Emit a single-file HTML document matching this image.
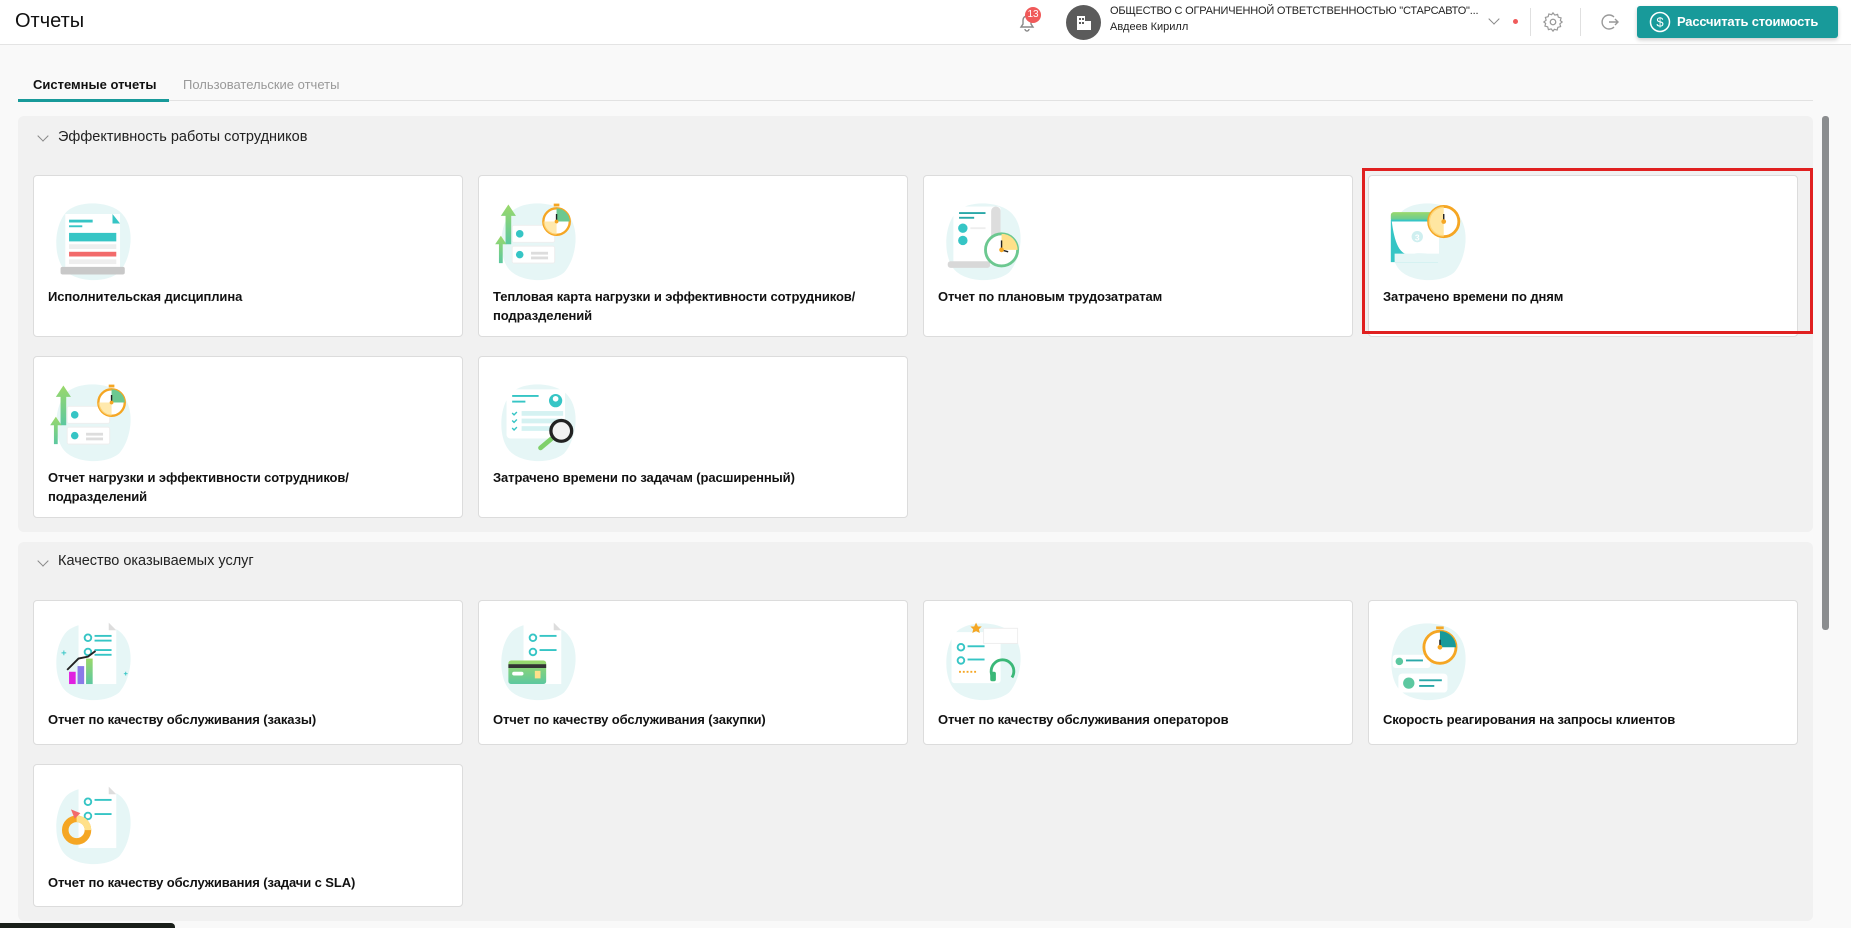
<!DOCTYPE html>
<html><head><meta charset="utf-8">
<style>
*{margin:0;padding:0;box-sizing:border-box}
body{width:1851px;height:928px;overflow:hidden;background:#f9f9f9;font-family:"Liberation Sans","Noto Sans CJK SC",sans-serif;color:#1a1a1a;position:relative}
.abs{position:absolute}
.hdr{left:0;top:0;width:1851px;height:45px;background:#fff;border-bottom:1px solid #e4e4e4}
.panel{background:#f1f1f1;border-radius:6px}
.card{position:absolute;background:#fff;border:1px solid #dcdcdc;border-radius:4px;width:430px}
.card svg{position:absolute;left:14px}
.card .t{position:absolute;left:14px;right:20px;font-size:13px;font-weight:bold;line-height:19px;color:#111;letter-spacing:-0.1px}
.sec{font-size:14.5px;color:#222}
.chev{width:8px;height:8px;border-right:1.3px solid #888;border-bottom:1.3px solid #888;transform:rotate(45deg)}
</style></head><body>
<div class="abs hdr"></div>
<div class="abs" style="left:15px;top:10px;font-size:20px;color:#111">Отчеты</div>
<svg class="abs" style="left:1016px;top:11px" width="22" height="22" viewBox="0 0 22 22"><path d="M5 16h12l-2-3V9a4 4 0 0 0-8 0v4z" fill="none" stroke="#888" stroke-width="1.4"/><path d="M9 18a2 2 0 0 0 4 0" fill="none" stroke="#888" stroke-width="1.4"/></svg>
<div class="abs" style="left:1025px;top:7px;width:16px;height:16px;border-radius:8px;background:#f05a5a;color:#fff;font-size:10px;text-align:center;line-height:16px">13</div>
<div class="abs" style="left:1066px;top:5px;width:35px;height:35px;border-radius:50%;background:#5b5b5b"></div>
<svg class="abs" style="left:1074px;top:13px" width="20" height="20" viewBox="0 0 20 20"><rect x="3" y="3" width="8" height="14" fill="#fff"/><rect x="11" y="8" width="6" height="9" fill="#fff"/><rect x="5" y="5" width="2" height="2" fill="#5b5b5b"/><rect x="8" y="5" width="2" height="2" fill="#5b5b5b"/><rect x="5" y="9" width="2" height="2" fill="#5b5b5b"/><rect x="8" y="9" width="2" height="2" fill="#5b5b5b"/></svg>
<div class="abs" style="left:1110px;top:5px;font-size:11px;color:#222;white-space:nowrap;letter-spacing:-0.2px">ОБЩЕСТВО С ОГРАНИЧЕННОЙ ОТВЕТСТВЕННОСТЬЮ "СТАРСАВТО"...</div>
<div class="abs" style="left:1110px;top:21px;font-size:11px;color:#222">Авдеев Кирилл</div>
<div class="abs chev" style="left:1490px;top:15px"></div>
<div class="abs" style="left:1513px;top:19px;width:5px;height:5px;border-radius:50%;background:#f05a5a"></div>
<div class="abs" style="left:1530px;top:8px;width:1px;height:28px;background:#e0e0e0"></div>
<svg class="abs" style="left:1542px;top:11px" width="22" height="22" viewBox="0 0 24 24"><circle cx="12" cy="12" r="3" fill="none" stroke="#999" stroke-width="1.4"/><path d="M12 2l2 2.5 3-.8.8 3 3 .8-.8 3L22 12l-2.5 2 .8 3-3 .8-.8 3-3-.8L12 22l-2-2.5-3 .8-.8-3-3-.8.8-3L2 12l2.5-2-.8-3 3-.8.8-3 3 .8z" fill="none" stroke="#999" stroke-width="1.3"/></svg>
<div class="abs" style="left:1580px;top:8px;width:1px;height:28px;background:#e0e0e0"></div>
<svg class="abs" style="left:1599px;top:11px" width="22" height="22" viewBox="0 0 22 22"><path d="M15 6A7 7 0 1 0 15 16" fill="none" stroke="#999" stroke-width="1.4"/><path d="M10 11h9M16 8l3 3-3 3" fill="none" stroke="#999" stroke-width="1.4"/></svg>
<div class="abs" style="left:1637px;top:6px;width:201px;height:32px;background:#189a9a;border-radius:3px;box-shadow:0 2px 4px rgba(0,0,0,.2)"></div>
<svg class="abs" style="left:1649px;top:11px" width="22" height="22" viewBox="0 0 22 22"><circle cx="11" cy="11" r="9.5" fill="none" stroke="#fff" stroke-width="1.5"/><text x="11" y="15.5" font-size="13" fill="#fff" text-anchor="middle" font-family="Liberation Sans">$</text></svg>
<div class="abs" style="left:1677px;top:14px;font-size:13px;color:#fff;font-weight:bold;letter-spacing:-0.2px">Рассчитать стоимость</div>

<div class="abs" style="left:18px;top:100px;width:1795px;height:1px;background:#e2e2e2"></div>
<div class="abs" style="left:18px;top:99px;width:151px;height:3px;background:#189a9a"></div>
<div class="abs" style="left:33px;top:77px;font-size:13px;font-weight:bold;color:#111">Системные отчеты</div>
<div class="abs" style="left:183px;top:77px;font-size:13px;color:#999">Пользовательские отчеты</div>

<div class="abs" style="left:1822px;top:116px;width:7px;height:514px;background:#8b8d8f;border-radius:3px"></div>
<div class="abs" style="left:0;top:923px;width:175px;height:5px;background:#1a1f1a;border-radius:0 4px 0 0"></div>

<svg width="0" height="0" style="position:absolute">
<defs>
<linearGradient id="gg" x1="0" y1="1" x2="0" y2="0"><stop offset="0" stop-color="#5cc8a0"/><stop offset="1" stop-color="#9ad86a"/></linearGradient>
<g id="blob"><path d="M20 15C35 2 70 5 80 20C92 35 88 65 75 80C60 92 30 90 18 78C5 65 5 30 20 15Z" fill="#e6f6f6"/></g>
<g id="watch"><circle cx="0" cy="0" r="14" fill="#fff" stroke="#f5a623" stroke-width="2.5"/><path d="M0 -14A14 14 0 0 1 14 0L0 0Z" fill="#6cc890"/><path d="M0 0L0 14A14 14 0 0 1 -14 0Z" fill="#ffe08a" opacity=".7"/><rect x="-3" y="-19" width="6" height="3" fill="#f5a623"/><line x1="0" y1="0" x2="0" y2="-8" stroke="#222" stroke-width="1.5"/><circle cx="0" cy="0" r="2" fill="#f5a623"/></g>
</defs></svg>

<div class="abs panel" style="left:18px;top:116px;width:1795px;height:416px"></div>
<div class="abs chev" style="left:39px;top:132px"></div>
<div class="abs sec" style="left:58px;top:129px">Эффективность работы сотрудников</div>

<div class="card" style="left:33px;top:175px;height:162px">
<svg style="top:21px" width="95" height="85" viewBox="0 0 100 90"><use href="#blob"/><rect x="18" y="18" width="58" height="60" fill="#fff"/><path d="M68 18l8 10h-8z" fill="#36c5c5"/><rect x="22" y="24" width="25" height="3" fill="#36c5c5"/><rect x="22" y="30" width="14" height="2" fill="#36c5c5"/><rect x="22" y="38" width="50" height="9" fill="#36c5c5"/><rect x="22" y="50" width="50" height="5" fill="#eee"/><rect x="22" y="58" width="50" height="5" fill="#f26b6b"/><rect x="22" y="66" width="50" height="5" fill="#eee"/><rect x="13" y="74" width="68" height="8" rx="2" fill="#c8c8c8"/></svg>
<div class="t" style="top:111px">Исполнительская дисциплина</div></div>

<div class="card" style="left:478px;top:175px;height:162px">
<svg style="top:21px" width="95" height="85" viewBox="0 0 100 90"><use href="#blob"/><path d="M8 20l8-12 8 12h-5v30h-6V20z" fill="url(#gg)"/><path d="M2 50l6-9 6 9h-4v20H6V50z" fill="url(#gg)"/><rect x="20" y="30" width="45" height="18" rx="2" fill="#fff" stroke="#eee"/><rect x="20" y="52" width="45" height="18" rx="2" fill="#fff" stroke="#eee"/><circle cx="28" cy="39" r="4" fill="#36c5c5"/><circle cx="28" cy="61" r="4" fill="#36c5c5"/><rect x="40" y="58" width="18" height="3" fill="#ddd"/><rect x="40" y="63" width="18" height="3" fill="#ddd"/><use href="#watch" transform="translate(67,26)"/></svg>
<div class="t" style="top:111px">Тепловая карта нагрузки и эффективности сотрудников/ подразделений</div></div>

<div class="card" style="left:923px;top:175px;height:162px">
<svg style="top:21px" width="95" height="85" viewBox="0 0 100 90"><use href="#blob"/><rect x="16" y="10" width="50" height="62" rx="3" fill="#fff"/><rect x="56" y="10" width="10" height="62" rx="5" fill="#ddd"/><rect x="22" y="16" width="28" height="2" fill="#2aa8a8"/><rect x="22" y="21" width="16" height="2" fill="#2aa8a8"/><circle cx="26" cy="33" r="5" fill="#36c5c5"/><circle cx="26" cy="46" r="5" fill="#36c5c5"/><rect x="34" y="32" width="16" height="2" fill="#eee"/><rect x="10" y="68" width="45" height="7" rx="3" fill="#d8d8d8"/><circle cx="67" cy="56" r="17" fill="#fff" stroke="#6cc890" stroke-width="3"/><path d="M67 39A17 17 0 0 1 84 56L67 56Z" fill="#ffe08a"/><line x1="67" y1="56" x2="67" y2="46" stroke="#222" stroke-width="1.5"/><line x1="67" y1="56" x2="74" y2="58" stroke="#222" stroke-width="1.5"/><circle cx="67" cy="56" r="2.5" fill="#f5a623"/></svg>
<div class="t" style="top:111px">Отчет по плановым трудозатратам</div></div>

<div class="card" style="left:1368px;top:175px;height:162px">
<svg style="top:21px" width="95" height="85" viewBox="0 0 100 90"><use href="#blob"/><rect x="8" y="16" width="52" height="10" rx="3" fill="url(#gg)"/><path d="M8 24h50v45H8z" fill="#36c5c5"/><path d="M9 26h50v35c-10 0-20-2-30 0C18 62 12 50 9 26z" fill="#fff"/><circle cx="36" cy="42" r="6" fill="#cfeff0"/><text x="36" y="46" font-size="9" fill="#fff" text-anchor="middle" font-family="Liberation Sans" font-weight="bold">3</text><path d="M12 60h58v9H12z" fill="#e6f6f6"/><circle cx="64" cy="26" r="16" fill="#fff" stroke="#f5a623" stroke-width="3"/><path d="M64 10A16 16 0 0 0 64 42Z" fill="#ffe08a" opacity=".8"/><line x1="64" y1="26" x2="64" y2="18" stroke="#222" stroke-width="1.5"/><circle cx="64" cy="26" r="2.5" fill="#f5a623"/></svg>
<div class="t" style="top:111px">Затрачено времени по дням</div></div>

<div class="card" style="left:33px;top:356px;height:162px">
<svg style="top:21px" width="95" height="85" viewBox="0 0 100 90"><use href="#blob"/><path d="M8 20l8-12 8 12h-5v30h-6V20z" fill="url(#gg)"/><path d="M2 50l6-9 6 9h-4v20H6V50z" fill="url(#gg)"/><rect x="20" y="30" width="45" height="18" rx="2" fill="#fff" stroke="#eee"/><rect x="20" y="52" width="45" height="18" rx="2" fill="#fff" stroke="#eee"/><circle cx="28" cy="39" r="4" fill="#36c5c5"/><circle cx="28" cy="61" r="4" fill="#36c5c5"/><rect x="40" y="58" width="18" height="3" fill="#ddd"/><rect x="40" y="63" width="18" height="3" fill="#ddd"/><use href="#watch" transform="translate(67,26)"/></svg>
<div class="t" style="top:111px">Отчет нагрузки и эффективности сотрудников/ подразделений</div></div>

<div class="card" style="left:478px;top:356px;height:162px">
<svg style="top:21px" width="95" height="85" viewBox="0 0 100 90"><use href="#blob"/><rect x="14" y="12" width="62" height="52" rx="4" fill="#fff"/><rect x="20" y="18" width="28" height="2" fill="#36c5c5"/><rect x="20" y="24" width="14" height="2" fill="#36c5c5"/><circle cx="66" cy="24" r="7" fill="#36c5c5"/><circle cx="66" cy="22" r="3" fill="#fff"/><rect x="30" y="35" width="44" height="5" fill="#d5f2f2"/><rect x="30" y="43" width="44" height="5" fill="#d5f2f2"/><rect x="30" y="51" width="30" height="5" fill="#d5f2f2"/><path d="M20 37l2 2 3-3M20 45l2 2 3-3M20 53l2 2 3-3" stroke="#36c5c5" stroke-width="1.5" fill="none"/><line x1="62" y1="64" x2="50" y2="74" stroke="#7ed06a" stroke-width="5" stroke-linecap="round"/><circle cx="72" cy="56" r="11" fill="#f2f2f2" stroke="#222" stroke-width="3.5"/></svg>
<div class="t" style="top:111px">Затрачено времени по задачам (расширенный)</div></div>

<div class="abs" style="left:1362px;top:168px;width:451px;height:166px;border:3px solid #e02020"></div>

<div class="abs panel" style="left:18px;top:542px;width:1795px;height:379px"></div>
<div class="abs chev" style="left:39px;top:557px"></div>
<div class="abs sec" style="left:58px;top:553px">Качество оказываемых услуг</div>

<div class="card" style="left:33px;top:600px;height:145px">
<svg style="top:16px" width="95" height="85" viewBox="0 0 100 90"><use href="#blob"/><rect x="32" y="6" width="40" height="65" fill="#fff"/><path d="M64 6l8 8h-8z" fill="#ddd"/><circle cx="42" cy="22" r="3.5" fill="none" stroke="#36c5c5" stroke-width="2"/><circle cx="42" cy="37" r="3.5" fill="none" stroke="#36c5c5" stroke-width="2"/><rect x="49" y="19" width="18" height="2" fill="#36c5c5"/><rect x="49" y="24" width="18" height="2" fill="#36c5c5"/><rect x="49" y="34" width="18" height="2" fill="#36c5c5"/><rect x="49" y="39" width="18" height="2" fill="#36c5c5"/><rect x="22" y="58" width="7" height="13" fill="#e020e0"/><rect x="31" y="52" width="7" height="19" fill="#8a7ae8"/><rect x="40" y="44" width="7" height="27" fill="url(#gg)"/><path d="M20 56l12-12 10-2 8-6" stroke="#222" stroke-width="2" fill="none"/><path d="M14 38h5M16.5 35.5v5M80 60h4M82 58v4" stroke="#36c5c5" stroke-width="1"/></svg>
<div class="t" style="top:109px">Отчет по качеству обслуживания (заказы)</div></div>

<div class="card" style="left:478px;top:600px;height:145px">
<svg style="top:16px" width="95" height="85" viewBox="0 0 100 90"><use href="#blob"/><rect x="32" y="6" width="40" height="65" fill="#fff"/><path d="M64 6l8 8h-8z" fill="#ddd"/><circle cx="42" cy="22" r="3.5" fill="none" stroke="#36c5c5" stroke-width="2"/><circle cx="42" cy="37" r="3.5" fill="none" stroke="#36c5c5" stroke-width="2"/><rect x="49" y="19" width="18" height="2" fill="#36c5c5"/><rect x="49" y="34" width="18" height="2" fill="#36c5c5"/><rect x="16" y="46" width="40" height="25" rx="3" fill="url(#gg)"/><rect x="16" y="50" width="40" height="4" fill="#333"/><rect x="20" y="58" width="12" height="4" rx="2" fill="#fff"/><rect x="44" y="57" width="6" height="8" fill="#ffe08a"/></svg>
<div class="t" style="top:109px">Отчет по качеству обслуживания (закупки)</div></div>

<div class="card" style="left:923px;top:600px;height:145px">
<svg style="top:16px" width="95" height="85" viewBox="0 0 100 90"><use href="#blob"/><rect x="14" y="16" width="52" height="54" rx="3" fill="#fff"/><circle cx="24" cy="32" r="3.5" fill="none" stroke="#36c5c5" stroke-width="2"/><circle cx="24" cy="46" r="3.5" fill="none" stroke="#36c5c5" stroke-width="2"/><rect x="31" y="30" width="18" height="2" fill="#36c5c5"/><rect x="31" y="44" width="18" height="2" fill="#36c5c5"/><path d="M22 58h18" stroke="#f5a623" stroke-width="2" stroke-dasharray="2 2"/><rect x="48" y="12" width="36" height="16" fill="#fff" stroke="#eee"/><path d="M40 6l2 4 4 0-3 3 1 4-4-2-4 2 1-4-3-3 4 0z" fill="#f5a623"/><path d="M58 64a12 12 0 1 1 20 0" stroke="#3bb878" stroke-width="3" fill="none"/><rect x="55" y="58" width="6" height="10" rx="2" fill="#3bb878"/></svg>
<div class="t" style="top:109px">Отчет по качеству обслуживания операторов</div></div>

<div class="card" style="left:1368px;top:600px;height:145px">
<svg style="top:16px" width="95" height="85" viewBox="0 0 100 90"><use href="#blob"/><rect x="10" y="40" width="40" height="14" rx="3" fill="#fff"/><circle cx="17" cy="47" r="4" fill="#5cc8a0"/><rect x="24" y="45" width="18" height="2" fill="#2aa8a8"/><rect x="16" y="60" width="52" height="20" rx="4" fill="#fff"/><circle cx="27" cy="70" r="6" fill="#5cc8a0"/><rect x="38" y="66" width="24" height="2" fill="#2aa8a8"/><rect x="38" y="72" width="16" height="2" fill="#2aa8a8"/><circle cx="60" cy="32" r="17" fill="#fff" stroke="#f5a623" stroke-width="3"/><path d="M60 15A17 17 0 0 1 77 32L60 32Z" fill="#189a9a"/><rect x="56" y="10" width="8" height="3" fill="#f5a623"/><line x1="60" y1="32" x2="60" y2="24" stroke="#222" stroke-width="1.5"/><circle cx="60" cy="32" r="2.5" fill="#f5a623"/></svg>
<div class="t" style="top:109px">Скорость реагирования на запросы клиентов</div></div>

<div class="card" style="left:33px;top:764px;height:143px">
<svg style="top:16px" width="95" height="85" viewBox="0 0 100 90"><use href="#blob"/><rect x="32" y="6" width="40" height="65" fill="#fff"/><path d="M64 6l8 8h-8z" fill="#ddd"/><circle cx="42" cy="22" r="3.5" fill="none" stroke="#36c5c5" stroke-width="2"/><circle cx="42" cy="37" r="3.5" fill="none" stroke="#36c5c5" stroke-width="2"/><rect x="49" y="19" width="18" height="2" fill="#36c5c5"/><rect x="49" y="34" width="18" height="2" fill="#36c5c5"/><circle cx="30" cy="52" r="12" fill="none" stroke="#f5a623" stroke-width="7"/><path d="M30 40A12 12 0 0 1 42 52" stroke="#ffe08a" stroke-width="7" fill="none"/><path d="M24 30l10 4-6 6z" fill="#f26b6b"/></svg>
<div class="t" style="top:108px">Отчет по качеству обслуживания (задачи с SLA)</div></div>
</body></html>
